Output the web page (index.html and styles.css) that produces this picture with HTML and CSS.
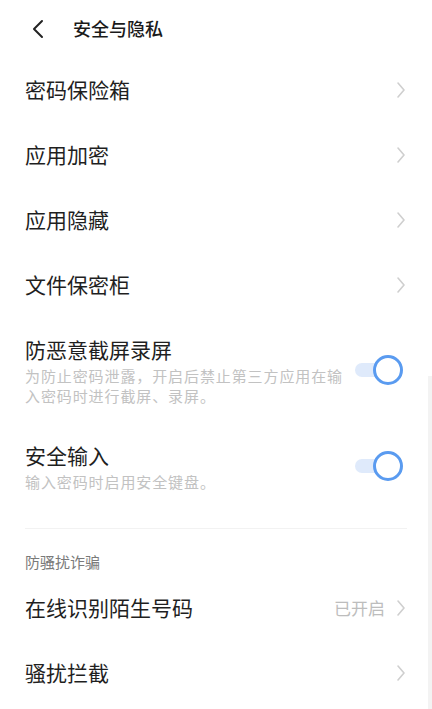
FILE: index.html
```html
<!DOCTYPE html>
<html>
<head>
    <title>安全与隐私</title>
    <link rel="stylesheet" href="styles.css">
</head>
<body>
    <div class="page">
        <header class="top-bar">
            <svg class="back" width="14" height="20" viewBox="0 0 14 20">
                <path d="M11 2 L3 10 L11 18" fill="none" stroke="#222" stroke-width="2" stroke-linecap="round" stroke-linejoin="round"/>
            </svg>
            <h1>安全与隐私</h1>
        </header>

        <ul class="setting-list">
            <li class="setting-item">
                <span class="item-title">密码保险箱</span>
                <svg class="arrow" width="10" height="18" viewBox="0 0 10 18"><path d="M2 2 L8 9 L2 16" fill="none" stroke="#cfcfcf" stroke-width="1.6" stroke-linecap="round" stroke-linejoin="round"/></svg>
            </li>
            <li class="setting-item">
                <span class="item-title">应用加密</span>
                <svg class="arrow" width="10" height="18" viewBox="0 0 10 18"><path d="M2 2 L8 9 L2 16" fill="none" stroke="#cfcfcf" stroke-width="1.6" stroke-linecap="round" stroke-linejoin="round"/></svg>
            </li>
            <li class="setting-item">
                <span class="item-title">应用隐藏</span>
                <svg class="arrow" width="10" height="18" viewBox="0 0 10 18"><path d="M2 2 L8 9 L2 16" fill="none" stroke="#cfcfcf" stroke-width="1.6" stroke-linecap="round" stroke-linejoin="round"/></svg>
            </li>
            <li class="setting-item">
                <span class="item-title">文件保密柜</span>
                <svg class="arrow" width="10" height="18" viewBox="0 0 10 18"><path d="M2 2 L8 9 L2 16" fill="none" stroke="#cfcfcf" stroke-width="1.6" stroke-linecap="round" stroke-linejoin="round"/></svg>
            </li>
            <li class="setting-item switch-item">
                <div class="item-text">
                    <span class="item-title">防恶意截屏录屏</span>
                    <p class="item-desc">为防止密码泄露，开启后禁止第三方应用在输入密码时进行截屏、录屏。</p>
                </div>
                <span class="switch"><span class="knob"></span></span>
            </li>
            <li class="setting-item switch-item">
                <div class="item-text">
                    <span class="item-title">安全输入</span>
                    <p class="item-desc">输入密码时启用安全键盘。</p>
                </div>
                <span class="switch"><span class="knob"></span></span>
            </li>
        </ul>

        <div class="divider"></div>
        <h2 class="section-title">防骚扰诈骗</h2>

        <ul class="setting-list">
            <li class="setting-item">
                <span class="item-title">在线识别陌生号码</span>
                <span class="item-value">已开启</span>
                <svg class="arrow" width="10" height="18" viewBox="0 0 10 18"><path d="M2 2 L8 9 L2 16" fill="none" stroke="#cfcfcf" stroke-width="1.6" stroke-linecap="round" stroke-linejoin="round"/></svg>
            </li>
            <li class="setting-item">
                <span class="item-title">骚扰拦截</span>
                <svg class="arrow" width="10" height="18" viewBox="0 0 10 18"><path d="M2 2 L8 9 L2 16" fill="none" stroke="#cfcfcf" stroke-width="1.6" stroke-linecap="round" stroke-linejoin="round"/></svg>
            </li>
        </ul>
        <div class="scrollbar"></div>
    </div>
</body>
</html>
```

FILE: styles.css
```css
body { margin: 0; background: #fff; font-family: "Noto Sans CJK SC", "Noto Sans", sans-serif; color: #1f1f1f; }
.page { position: relative; width: 432px; height: 709px; overflow: hidden; }
.top-bar { height: 57px; display: flex; align-items: center; padding-left: 31px; }
.top-bar .back { margin-right: 28px; }
.top-bar h1 { margin: 0; font-size: 18px; font-weight: 500; line-height: 27px; color: #1a1a1a; }
.setting-list { list-style: none; margin: 0; padding: 0 25px; }
.setting-item { height: 65px; display: flex; align-items: center; }
.item-title { font-size: 21px; line-height: 31px; color: #1f1f1f; flex: 1; }
.item-value { font-size: 17px; line-height: 25px; color: #bdbdbd; margin-right: 11px; }
.arrow { margin-right: 1px; }
.switch-item { height: auto; padding: 17px 0; gap: 10px; }
.item-text { flex: 1; }
.item-text .item-title { display: block; }
.item-desc { margin: 1px 0 0; font-size: 15px; letter-spacing: 0.9px; line-height: 20px; color: #c2c2c2; }
.switch { position: relative; width: 48px; height: 30px; flex-shrink: 0; margin-right: 4px; }
.switch::before { content: ""; position: absolute; left: 0; top: 8px; width: 36px; height: 14px; border-radius: 7px; background: #dfeafb; }
.knob { position: absolute; right: 0; top: 0; width: 24px; height: 24px; border: 3px solid #5a9bf0; border-radius: 50%; background: #fff; }
.divider { height: 1px; background: #f2f2f2; margin: 19px 25px 0; }
.section-title { margin: 0; padding: 20px 25px 0; height: 26px; font-size: 15px; font-weight: 400; line-height: 26px; color: #7a7a7a; }
.scrollbar { position: absolute; right: 0; top: 376px; width: 4px; bottom: 0; background: #f3f3f3; }
```
